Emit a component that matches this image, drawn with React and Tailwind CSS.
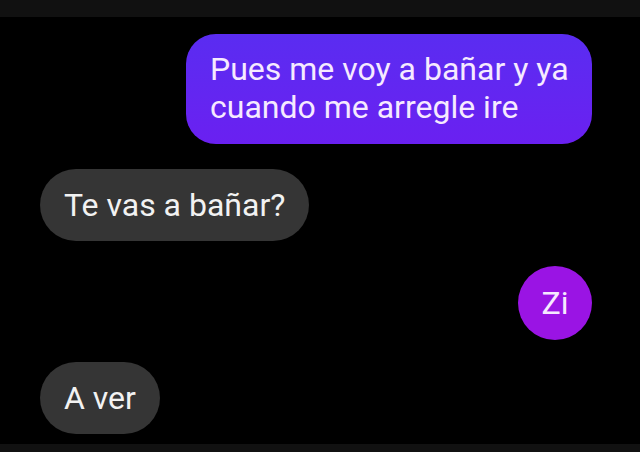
import React from "react";

const messages = [
  { id: 1, mine: true, text: "Pues me voy a bañar y ya cuando me arregle ire" },
  { id: 2, mine: false, text: "Te vas a bañar?" },
  { id: 3, mine: true, round: true, text: "Zi" },
  { id: 4, mine: false, text: "A ver" },
];

const Bubble = ({ msg }) => {
  if (msg.round) {
    return (
      <div className="self-end mr-[48px] w-[74px] h-[74px] rounded-full bg-[#9a14e4] flex items-center justify-center text-[32px] text-[#f6e9ff]">
        {msg.text}
      </div>
    );
  }
  if (msg.mine) {
    return (
      <div className="self-end mr-[48px] w-[406px] h-[110px] rounded-[30px] bg-gradient-to-b from-[#5a2cf1] to-[#6a20f1] pl-[24px] pr-3 pt-[16px] text-[32px] leading-[38px] text-[#f6eaff]">
        {msg.text}
      </div>
    );
  }
  return (
    <div className="self-start ml-[40px] h-[72px] rounded-full bg-[#353535] px-[24px] flex items-center text-[32px] text-[#f2f2f2]">
      {msg.text}
    </div>
  );
};

export default function App() {
  return (
    <div className="w-[640px] h-[452px] bg-black flex flex-col overflow-hidden" style={{ fontFamily: "Roboto, 'Noto Sans', sans-serif" }}>
      <div className="h-[17px] bg-[#111111]" />
      <div className="flex-1 flex flex-col pt-[17px]">
        <Bubble msg={messages[0]} />
        <div className="mt-[25px] flex flex-col">
          <Bubble msg={messages[1]} />
        </div>
        <div className="mt-[25px] flex flex-col">
          <Bubble msg={messages[2]} />
        </div>
        <div className="mt-[22px] flex flex-col">
          <Bubble msg={messages[3]} />
        </div>
      </div>
      <div className="h-[8px] bg-[#111111]" />
    </div>
  );
}
